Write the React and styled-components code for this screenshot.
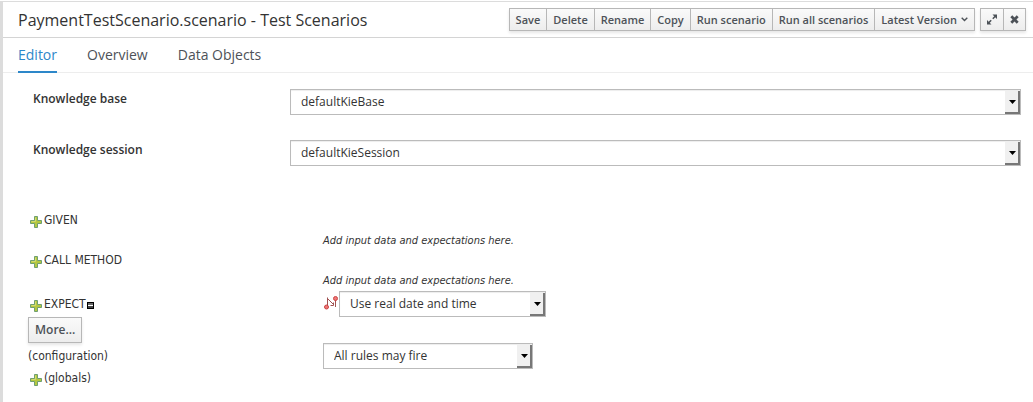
import React from "react";
import styled, { createGlobalStyle, css } from "styled-components";

const Global = createGlobalStyle`
  *, *::before, *::after { box-sizing: border-box; }
  body {
    margin: 0;
    background: #fff;
    color: #333;
    font: 12px/20px "Open Sans", "Noto Sans", sans-serif;
  }
  button, select { font: inherit; color: inherit; }
`;

const Page = styled.div`
  padding-top: 1px;
`;

const Panel = styled.main`
  min-height: calc(100vh - 1px);
  border-top: 1px solid #dcdcdc;
  border-left: 3px solid #dcdcdc;
`;

const Header = styled.header`
  display: flex;
  align-items: center;
  justify-content: space-between;
  height: 36px;
  padding: 0 7px 0 15px;
  border-bottom: 1px solid #d4d4d4;
`;

const Title = styled.h1`
  margin: 0;
  font-size: 16px;
  font-weight: 400;
  line-height: 24px;
  white-space: nowrap;
`;

const Toolbar = styled.div`
  display: flex;
  gap: 5px;
`;

const ButtonGroup = styled.div`
  display: flex;
  box-shadow: 0 2px 3px rgba(3, 3, 3, 0.1);
`;

const buttonFace = css`
  border: 1px solid #b7b7b7;
  background: linear-gradient(#fafafa, #ededed);
  color: #4d5258;
  font-weight: 600;
  white-space: nowrap;
`;

const ToolButton = styled.button`
  ${buttonFace}
  display: flex;
  align-items: center;
  gap: 4px;
  height: 23px;
  padding: 0 6px;
  font-size: 11px;
  & + & { margin-left: -1px; }
`;

const Tabs = styled.nav`
  display: flex;
  gap: 30px;
  height: 35px;
  padding: 0 15px;
  border-bottom: 1px solid #ededed;
`;

const Tab = styled.a`
  height: 35px;
  border-bottom: 2px solid ${(p) => (p.$active ? "#2d87c9" : "transparent")};
  color: ${(p) => (p.$active ? "#2d87c9" : "#4d5258")};
  font-size: 14px;
  line-height: 34px;
  text-decoration: none;
`;

const Form = styled.form`
  padding: 16px 12px 0 30px;
`;

const Field = styled.div`
  display: grid;
  grid-template-columns: 257px 1fr;
  align-items: start;
  margin-bottom: 25px;
`;

const FieldLabel = styled.label`
  font-weight: 600;
`;

const SelectBox = styled.span`
  position: relative;
  display: block;
  width: ${(p) => p.$width || "100%"};
`;

const NativeSelect = styled.select`
  display: block;
  width: 100%;
  height: 26px;
  padding: 0 20px 0 10px;
  border: 1px solid #bbb;
  border-radius: 0;
  background: #fff;
  appearance: none;
  font-family: "Open Sans", sans-serif;
  box-shadow: inset 0 1px 1px rgba(3, 3, 3, 0.075);
`;

const SelectArrow = styled.span`
  position: absolute;
  top: 2px;
  right: 1px;
  bottom: 1px;
  display: grid;
  place-items: center;
  width: 15px;
  padding-left: 2px;
  border: solid #777;
  border-width: 0 2px 2px 0;
  background: #f0f0f0;
  pointer-events: none;
`;

const Scenario = styled.section`
  display: grid;
  grid-template-columns: 295px 1fr;
  grid-template-rows: 40px 40px 26px 26px 26px 22px;
  padding: 20px 12px 0 25px;
`;

const Cell = styled.div`
  display: flex;
  align-items: center;
  align-self: ${(p) => p.$align || "start"};
  font-family: "DejaVu Sans Condensed", "DejaVu Sans", sans-serif;
`;

const AddButton = styled.button`
  display: flex;
  align-items: center;
  gap: 1px;
  height: 18px;
  padding: 0 0 0 1px;
  border: 0;
  background: none;
  svg { margin-top: 4px; }
`;

const IconButton = styled.button`
  display: flex;
  padding: 3px 0 0 1px;
  border: 0;
  background: none;
`;

const Hint = styled.em`
  font-size: 11px;
`;

const MoreButton = styled.button`
  ${buttonFace}
  height: 26px;
  padding: 0 6px;
  font-family: "Open Sans", sans-serif;
  box-shadow: 0 2px 3px rgba(3, 3, 3, 0.1);
`;

const Plus = () => (
  <svg width="14" height="14" viewBox="0 0 14 14" aria-hidden="true">
    <path d="M5.5 1.5h3v4h4v3h-4v4h-3v-4h-4v-3h4z" fill="#b5c840" stroke="#6f9f70" />
    <path d="M6.5 2.5v4h-4" fill="none" stroke="#d3dc70" />
  </svg>
);

const Collapse = () => (
  <svg width="7" height="7" viewBox="0 0 7 7" aria-hidden="true">
    <path d="M0 0h7v7H0z" fill="#000" />
    <path d="M1 1h5v2H1z" fill="#666" />
    <path d="M1 3h5v1H1z" fill="#fff" />
    <path d="M1 4h5v2H1z" fill="#444" />
  </svg>
);

const PathIcon = () => (
  <svg width="16" height="16" viewBox="0 0 16 16" aria-hidden="true">
    <path d="M4.500 10V1.500M4.500 2.500l6 6M12.500 4v7M7.500 9.500h3V6.500" fill="none" stroke="#a05252" />
    <circle cx="3.500" cy="11" r="2" fill="#ee7777" stroke="#cc4444" />
    <circle cx="12.500" cy="2.500" r="2" fill="#ee7777" stroke="#cc4444" />
  </svg>
);

const Expand = () => (
  <svg width="10" height="11" viewBox="0 0 10 11" aria-hidden="true">
    <path d="M5.500 0.500H10V5zM0 6v4.500h4.500z" fill="#4d5258" />
    <path d="M8.500 2L5.800 4.700M4.200 6.300L1.500 9" stroke="#4d5258" strokeWidth="1.600" />
  </svg>
);

const Close = () => (
  <svg width="9" height="9" viewBox="0 0 9 9" aria-hidden="true">
    <path d="M1.300 1.300l6.400 6.400M7.700 1.300L1.300 7.700" stroke="#4d5258" strokeWidth="2.700" />
  </svg>
);

const Chevron = () => (
  <svg width="7" height="5" viewBox="0 0 7 5" aria-hidden="true">
    <path d="M0.700 0.700L3.500 3.500 6.300 0.700" fill="none" stroke="#4d5258" strokeWidth="1.400" />
  </svg>
);

const Select = ({ width, value, ...rest }) => (
  <SelectBox $width={width}>
    <NativeSelect defaultValue={value} {...rest}>
      <option>{value}</option>
    </NativeSelect>
    <SelectArrow>
      <svg width="7" height="4" viewBox="0 0 7 4" aria-hidden="true">
        <path d="M0 0h7L3.500 4z" fill="#000" />
      </svg>
    </SelectArrow>
  </SelectBox>
);

const Add = ({ children }) => (
  <AddButton type="button">
    <Plus />
    {children}
  </AddButton>
);

const actions = ["Save", "Delete", "Rename", "Copy", "Run scenario", "Run all scenarios"];

export default function App() {
  return (
    <Page>
      <Global />
      <Panel>
        <Header>
          <Title>PaymentTestScenario.scenario - Test Scenarios</Title>
          <Toolbar>
            <ButtonGroup>
              {actions.map((a) => (
                <ToolButton key={a} type="button">{a}</ToolButton>
              ))}
              <ToolButton type="button">
                Latest Version
                <Chevron />
              </ToolButton>
            </ButtonGroup>
            <ButtonGroup>
              <ToolButton type="button" aria-label="Maximize"><Expand /></ToolButton>
              <ToolButton type="button" aria-label="Close"><Close /></ToolButton>
            </ButtonGroup>
          </Toolbar>
        </Header>
        <Tabs>
          <Tab href="#editor" $active>Editor</Tab>
          <Tab href="#overview">Overview</Tab>
          <Tab href="#data">Data Objects</Tab>
        </Tabs>
        <Form>
          <Field>
            <FieldLabel htmlFor="base">Knowledge base</FieldLabel>
            <Select id="base" value="defaultKieBase" />
          </Field>
          <Field>
            <FieldLabel htmlFor="session">Knowledge session</FieldLabel>
            <Select id="session" value="defaultKieSession" />
          </Field>
        </Form>
        <Scenario>
          <Cell><Add>GIVEN</Add></Cell>
          <Cell $align="end"><Hint>Add input data and expectations here.</Hint></Cell>
          <Cell><Add>CALL METHOD</Add></Cell>
          <Cell $align="end"><Hint>Add input data and expectations here.</Hint></Cell>
          <Cell $align="center">
            <Add>EXPECT</Add>
            <IconButton type="button" aria-label="Collapse"><Collapse /></IconButton>
          </Cell>
          <Cell>
            <PathIcon />
            <Select width="207px" value="Use real date and time" aria-label="Date and time" />
          </Cell>
          <Cell><MoreButton type="button">More...</MoreButton></Cell>
          <Cell />
          <Cell $align="center">(configuration)</Cell>
          <Cell><Select width="210px" value="All rules may fire" aria-label="Rules" /></Cell>
          <Cell><Add>(globals)</Add></Cell>
        </Scenario>
      </Panel>
    </Page>
  );
}
